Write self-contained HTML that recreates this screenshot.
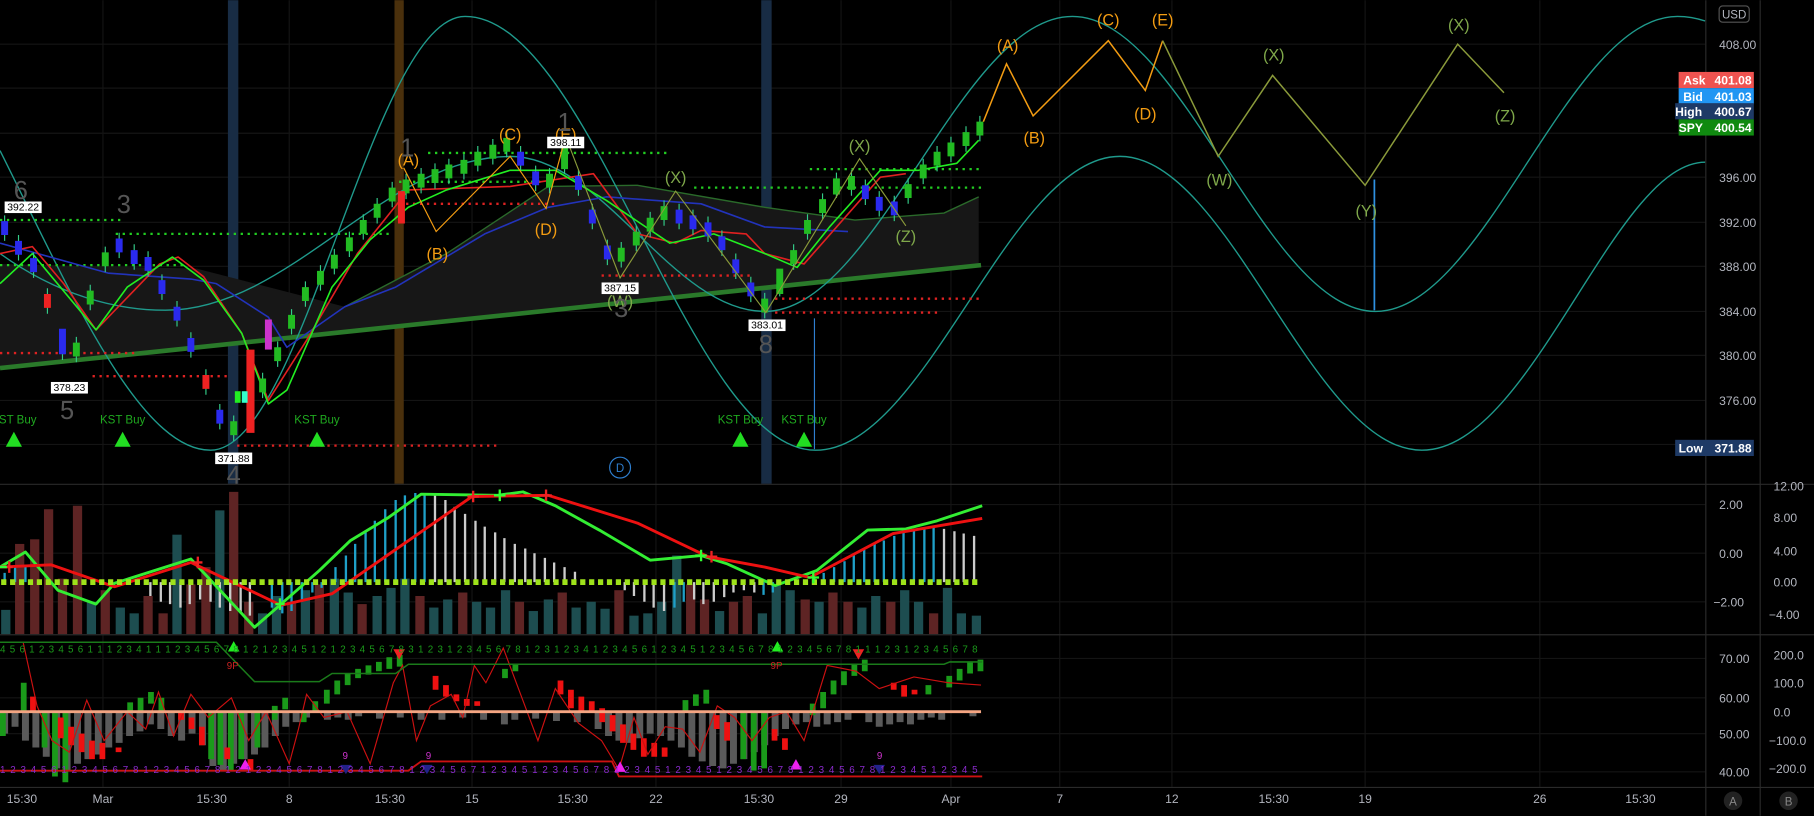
<!DOCTYPE html>
<html><head><meta charset="utf-8">
<style>
html,body{margin:0;padding:0;background:#000;overflow:hidden}
svg{display:block}
text{font-family:"Liberation Sans",sans-serif}
</style></head>
<body>
<svg width="1814" height="816" viewBox="0 0 1568 705" xmlns="http://www.w3.org/2000/svg">
<rect width="1568" height="705" fill="#000"/>
<g stroke="#141414" stroke-width="1">
<path d="M0,38H1474M0,76H1474M0,115H1474M0,153H1474M0,192H1474M0,230H1474M0,269H1474M0,307H1474M0,346H1474M0,384H1474M0,436H1474M0,478H1474M0,520H1474M0,569H1474M0,603H1474M0,634H1474M0,667H1474"/>
<path d="M89,0V680M250,0V680M408,0V680M567,0V680M727,0V680M822,0V680M916,0V680M1013,0V680M1180,0V680M1331,0V680"/>
</g>
<rect x="341" y="0" width="8" height="418" fill="#4a300c"/>
<rect x="197" y="0" width="9" height="418" fill="#182c44"/>
<rect x="658" y="0" width="9" height="418" fill="#182c44"/>

<!-- band -->
<path d="M0,228 L170,232 L298,265 L386,219 L474,161 L551,160 L661,179 L739,190 L816,184 L846,170 L846,229 L0,318 Z" fill="#171717"/>
<path d="M298,265 L386,219 L474,161 L551,160 L661,179 L739,190 L816,184 L846,170" fill="none" stroke="#2a6a2a" stroke-width="1.2"/>
<line x1="0" y1="318" x2="848" y2="229" stroke="#2a7a2a" stroke-width="4"/>

<!-- cycle curves -->
<g fill="none" stroke="#1f9a8c" stroke-width="1.2">
<path d="M0,130 C60,250 120,389 182,389 C262,389 322,14 402,14 C512,14 595,389 705,389 C801,389 872,135 968,135 C1063,135 1134,389 1229,389 C1324,389 1395,140 1474,140"/>
<path d="M0,219 C50,255 100,268 143,268 C251,268 333,135 441,135 C521,135 581,269 661,269 C758,269 830,14 927,14 C1022,14 1094,269 1189,269 C1284,269 1355,14 1450,14 C1460,14 1468,16 1474,18"/>
</g>

<!-- dotted levels -->
<g stroke-width="2" stroke-dasharray="2,4" fill="none">
<path stroke="#22cc22" d="M0,190H105M100,202H340M370,132H578M345,157H470M600,162H848M700,146H848M0,229H160"/>
<path stroke="#dd2222" d="M0,305H120M80,325H200M205,385H430M520,238H650M670,258H848M670,270H810M345,176H480"/>
</g>

<!-- MAs -->
<g fill="none" stroke-width="1.4" stroke-linejoin="round">
<path stroke="#2233bb" d="M0,210 L94,236 L165,241 L187,245 L232,274 L248,300 L298,265 L342,248 L419,202 L474,179 L524,170 L606,176 L661,196 L733,200"/>
<path stroke="#e02020" d="M0,219 L28,213 L55,245 L83,285 L138,228 L154,222 L176,239 L209,288 L232,346 L265,294 L309,219 L353,164 L441,161 L513,150 L551,202 L584,210 L606,199 L645,202 L661,219 L695,228 L761,153 L783,150"/>
<path stroke="#22ee22" d="M0,245 L28,219 L83,285 L110,248 L149,222 L176,242 L209,288 L232,349 L248,337 L287,248 L320,207 L353,179 L386,164 L441,147 L480,147 L524,173 L579,210 L617,202 L661,219 L689,231 L717,196 L761,147 L794,147 L827,141 L846,121"/>
</g>

<!-- candle wicks -->
<path stroke="#3c8" stroke-width="1" fill="none" d="M4,186v22M16,203v22M29,218v22M41,249v22M54,289v22M66,291v22M78,246v22M91,213v22M103,201v22M116,211v22M128,217v22M140,237v22M153,260v22M165,287v22M178,319v22M190,349v22M202,359v22M227,322v22M240,295v22M252,267v22M264,243v22M277,229v22M289,215v22M302,200v22M314,185v22M326,171v22M339,157v22M351,150v22M364,145v22M376,141v22M388,137v22M401,133v22M413,126v22M426,120v22M438,114v22M450,126v22M463,143v22M475,145v22M488,120v30M500,147v22M512,176v22M525,207v22M537,209v22M550,195v22M562,183v22M574,173v22M587,176v22M599,181v22M612,187v22M624,199v22M636,219v22M649,239v22M661,253v22M674,234v22M686,211v22M698,185v22M711,167v22M723,149v22M736,147v22M748,155v22M760,165v22M773,169v22M785,154v22M798,137v22M810,126v22M822,118v22M835,109v22M847,100v22"/>
<path fill="#22bb22" d="M63,296h6v12h-6zM75,251h6v12h-6zM88,218h6v12h-6zM199,364h6v12h-6zM224,327h6v12h-6zM237,300h6v12h-6zM249,272h6v12h-6zM261,248h6v12h-6zM274,234h6v12h-6zM286,220h6v12h-6zM299,205h6v12h-6zM311,190h6v12h-6zM323,176h6v12h-6zM336,162h6v12h-6zM348,155h6v12h-6zM361,150h6v12h-6zM373,146h6v12h-6zM385,142h6v12h-6zM398,138h6v12h-6zM410,131h6v12h-6zM423,125h6v12h-6zM435,119h6v12h-6zM472,150h6v12h-6zM485,126h6v20h-6zM534,214h6v12h-6zM547,200h6v12h-6zM559,188h6v12h-6zM571,178h6v12h-6zM658,258h6v12h-6zM671,232h6v22h-6zM683,216h6v12h-6zM695,190h6v12h-6zM708,172h6v12h-6zM720,154h6v14h-6zM733,152h6v12h-6zM782,159h6v12h-6zM795,142h6v12h-6zM807,131h6v12h-6zM819,123h6v12h-6zM832,114h6v12h-6zM844,105h6v12h-6z"/>
<path fill="#2a2aee" d="M1,191h6v12h-6zM13,208h6v12h-6zM26,223h6v12h-6zM51,284h6v22h-6zM100,206h6v12h-6zM113,216h6v12h-6zM125,222h6v12h-6zM137,242h6v12h-6zM150,265h6v12h-6zM162,292h6v12h-6zM187,354h6v12h-6zM447,131h6v12h-6zM460,148h6v12h-6zM497,152h6v12h-6zM509,181h6v12h-6zM522,212h6v12h-6zM584,181h6v12h-6zM596,186h6v12h-6zM609,192h6v12h-6zM621,204h6v12h-6zM633,224h6v12h-6zM646,244h6v12h-6zM745,160h6v12h-6zM757,170h6v12h-6zM770,174h6v12h-6z"/>
<path fill="#ee2222" d="M38,254h6v12h-6zM175,324h6v12h-6zM213,302h7v72h-7zM344,165h6v28h-6z"/>
<rect x="229" y="276" width="6" height="26" fill="#cc33cc"/>
<rect x="203" y="338" width="5" height="10" fill="#22ee22"/><rect x="209" y="338" width="5" height="10" fill="#33ffcc"/>
<line x1="704" y1="275" x2="704" y2="388" stroke="#2f7fd0" stroke-width="1"/>

<!-- wave count -->
<polyline points="850,105 870,55 893,100 958,35 990,78 1005,35" fill="none" stroke="#f39c12" stroke-width="1.3"/>
<polyline points="1005,35 1053,135 1100,65 1180,160 1260,38 1300,80" fill="none" stroke="#8a9a3a" stroke-width="1.3"/>
<polyline points="349,145 377,200 441,135 472,180 489,118" fill="none" stroke="#f39c12" stroke-width="1"/>
<polyline points="489,118 536,240 584,165 662,270 743,137 783,195" fill="none" stroke="#8a9a3a" stroke-width="1"/>
<line x1="1188" y1="155" x2="1188" y2="268" stroke="#2f90e0" stroke-width="1.5"/>
<g font-size="14" text-anchor="middle">
<text x="871" y="44" fill="#f39c12">(A)</text>
<text x="894" y="124" fill="#f39c12">(B)</text>
<text x="958" y="22" fill="#f39c12">(C)</text>
<text x="990" y="103" fill="#f39c12">(D)</text>
<text x="1005" y="22" fill="#f39c12">(E)</text>
<text x="1054" y="160" fill="#7fa84a">(W)</text>
<text x="1101" y="52" fill="#7fa84a">(X)</text>
<text x="1181" y="187" fill="#7fa84a">(Y)</text>
<text x="1261" y="26" fill="#7fa84a">(X)</text>
<text x="1301" y="105" fill="#7fa84a">(Z)</text>
<text x="353" y="143" fill="#f39c12">(A)</text>
<text x="378" y="224" fill="#f39c12">(B)</text>
<text x="441" y="121" fill="#f39c12">(C)</text>
<text x="472" y="203" fill="#f39c12">(D)</text>
<text x="489" y="121" fill="#f39c12">(E)</text>
<text x="584" y="158" fill="#7fa84a">(X)</text>
<text x="536" y="265" fill="#7fa84a">(W)</text>
<text x="743" y="131" fill="#7fa84a">(X)</text>
<text x="783" y="209" fill="#7fa84a">(Z)</text>
</g>
<g font-size="22" fill="#555" text-anchor="middle">
<text x="18" y="172">6</text><text x="107" y="184">3</text><text x="58" y="362">5</text>
<text x="352" y="135">1</text><text x="488" y="113">1</text><text x="537" y="274">3</text>
<text x="662" y="305">8</text><text x="202" y="418">4</text>
</g>
<g font-size="10" fill="#1fa81f" text-anchor="middle">
<text x="12" y="366">KST Buy</text><text x="106" y="366">KST Buy</text><text x="274" y="366">KST Buy</text>
<text x="640" y="366">KST Buy</text><text x="695" y="366">KST Buy</text>
</g>
<g fill="#22dd22">
<polygon points="12,373 19,386 5,386"/><polygon points="106,373 113,386 99,386"/><polygon points="274,373 281,386 267,386"/>
<polygon points="640,373 647,386 633,386"/><polygon points="695,373 702,386 688,386"/>
</g>
<g font-size="9" text-anchor="middle">
<rect x="4" y="174" width="32" height="10" fill="#fff"/><text x="20" y="182">392.22</text>
<rect x="44" y="330" width="32" height="10" fill="#fff"/><text x="60" y="338">378.23</text>
<rect x="186" y="391" width="32" height="10" fill="#fff"/><text x="202" y="399">371.88</text>
<rect x="473" y="118" width="32" height="10" fill="#fff"/><text x="489" y="126">398.11</text>
<rect x="520" y="244" width="32" height="10" fill="#fff"/><text x="536" y="252">387.15</text>
<rect x="647" y="276" width="32" height="10" fill="#fff"/><text x="663" y="284">383.01</text>
</g>
<circle cx="536" cy="404" r="9" fill="none" stroke="#2f7fd0"/><text x="536" y="408" font-size="10" fill="#2f7fd0" text-anchor="middle">D</text>

<!-- pane 2 -->
<g fill="#1d4d50">
<rect x="1" y="527" width="8" height="21"/><rect x="75" y="520" width="8" height="28"/><rect x="100" y="525" width="8" height="23"/><rect x="112" y="530" width="8" height="18"/><rect x="149" y="462" width="8" height="86"/><rect x="186" y="441" width="8" height="107"/><rect x="223" y="530" width="8" height="18"/><rect x="235" y="515" width="8" height="33"/><rect x="260" y="510" width="8" height="38"/><rect x="285" y="500" width="8" height="48"/><rect x="297" y="512" width="8" height="36"/><rect x="322" y="515" width="8" height="33"/><rect x="334" y="508" width="8" height="40"/><rect x="346" y="500" width="8" height="48"/><rect x="371" y="525" width="8" height="23"/><rect x="383" y="518" width="8" height="30"/><rect x="408" y="520" width="8" height="28"/><rect x="420" y="525" width="8" height="23"/><rect x="433" y="510" width="8" height="38"/><rect x="457" y="528" width="8" height="20"/><rect x="470" y="518" width="8" height="30"/><rect x="494" y="525" width="8" height="23"/><rect x="507" y="520" width="8" height="28"/><rect x="519" y="526" width="8" height="22"/><rect x="544" y="532" width="8" height="16"/><rect x="556" y="530" width="8" height="18"/><rect x="568" y="520" width="8" height="28"/><rect x="581" y="480" width="8" height="68"/><rect x="618" y="528" width="8" height="20"/><rect x="655" y="530" width="8" height="18"/><rect x="667" y="505" width="8" height="43"/><rect x="679" y="510" width="8" height="38"/><rect x="704" y="520" width="8" height="28"/><rect x="741" y="525" width="8" height="23"/><rect x="753" y="515" width="8" height="33"/><rect x="778" y="510" width="8" height="38"/><rect x="790" y="520" width="8" height="28"/><rect x="815" y="508" width="8" height="40"/><rect x="827" y="530" width="8" height="18"/><rect x="840" y="532" width="8" height="16"/>
</g>
<g fill="#5e2424">
<rect x="13" y="470" width="8" height="78"/><rect x="26" y="466" width="8" height="82"/><rect x="38" y="440" width="8" height="108"/><rect x="50" y="500" width="8" height="48"/><rect x="63" y="437" width="8" height="111"/><rect x="87" y="510" width="8" height="38"/><rect x="124" y="515" width="8" height="33"/><rect x="137" y="530" width="8" height="18"/><rect x="161" y="505" width="8" height="43"/><rect x="174" y="490" width="8" height="58"/><rect x="198" y="425" width="8" height="123"/><rect x="211" y="520" width="8" height="28"/><rect x="248" y="520" width="8" height="28"/><rect x="272" y="505" width="8" height="43"/><rect x="309" y="522" width="8" height="26"/><rect x="359" y="515" width="8" height="33"/><rect x="396" y="512" width="8" height="36"/><rect x="445" y="520" width="8" height="28"/><rect x="482" y="512" width="8" height="36"/><rect x="531" y="510" width="8" height="38"/><rect x="593" y="505" width="8" height="43"/><rect x="605" y="518" width="8" height="30"/><rect x="630" y="520" width="8" height="28"/><rect x="642" y="515" width="8" height="33"/><rect x="692" y="518" width="8" height="30"/><rect x="716" y="512" width="8" height="36"/><rect x="729" y="520" width="8" height="28"/><rect x="766" y="520" width="8" height="28"/><rect x="803" y="530" width="8" height="18"/>
</g>
<path stroke="#1fa0c8" stroke-width="2" d="M290,503V490M299,503V480M307,503V470M316,503V460M324,503V450M333,503V440M342,503V432M350,503V428M359,503V426M367,503V427M235,503V525M244,503V530M252,503V528M261,503V520M270,503V512M278,503V508M4,503V495M13,503V490M22,503V488M704,503V498M712,503V495M721,503V490M730,503V485M738,503V480M747,503V475M756,503V470M764,503V467M773,503V463M781,503V460M790,503V458M799,503V456M807,503V455M583,503V525M591,503V520M660,503V514M668,503V512"/>
<path stroke="#cccccc" stroke-width="2" d="M376,503V428M385,503V432M393,503V438M402,503V444M411,503V450M419,503V455M428,503V460M436,503V465M445,503V470M454,503V474M462,503V478M471,503V482M479,503V486M488,503V490M497,503V494M130,503V515M139,503V520M147,503V522M156,503V525M164,503V522M173,503V518M182,503V520M190,503V525M199,503V528M208,503V530M216,503V532M540,503V510M548,503V515M557,503V520M565,503V525M574,503V528M600,503V518M608,503V522M617,503V520M626,503V516M634,503V512M643,503V510M652,503V512M816,503V457M825,503V459M833,503V461M842,503V463"/>
<path fill="none" stroke="#33ee33" stroke-width="2.5" stroke-linejoin="round" d="M0,490 L22,477 L50,510 L83,522 L99,504 L165,483 L220,542 L243,522 L276,493 L303,467 L336,447 L364,427 L430,428 L452,425 L480,437 L518,458 L562,484 L606,480 L628,487 L670,506 L706,493 L750,458 L783,457 L810,450 L849,437"/>
<path fill="none" stroke="#ee1111" stroke-width="2.5" stroke-linejoin="round" d="M0,490 L44,488 L99,507 L165,486 L243,523 L287,513 L408,429 L474,428 L551,452 L612,481 L661,490 L700,499 L772,461 L849,448"/>
<path stroke="#9ee21a" stroke-width="5" stroke-dasharray="4.5,3.2" d="M1,503H848"/>
<g stroke-width="2" fill="none"><path stroke="#ee2222" d="M3,490h8M8,485v10M167,486h8M171,481v10M404,429h10M409,424v10M467,428h10M472,423v10M610,481h10M615,476v10"/><path stroke="#33ff33" d="M0,490h6M238,522h8M242,517v10M427,428h10M432,423v10M698,499h10M703,494v10M601,480h10M606,475v10"/></g>

<!-- pane 3 -->
<g fill="#5a5a5a">
<path d="M1,616h6v18h-6zM10,616h6v12h-6zM19,616h6v24h-6zM28,616h6v30h-6zM37,616h6v38h-6zM46,616h6v48h-6zM55,616h6v50h-6zM64,616h6v44h-6zM73,616h6v40h-6zM82,616h6v36h-6zM91,616h6v30h-6zM100,616h6v26h-6zM109,616h6v20h-6zM118,616h6v16h-6zM127,616h6v10h-6zM136,616h6v14h-6zM145,616h6v20h-6zM154,616h6v24h-6zM163,616h6v18h-6zM172,616h6v28h-6zM181,616h6v46h-6zM190,616h6v50h-6zM199,616h6v44h-6zM208,616h6v40h-6zM217,616h6v36h-6zM226,616h6v30h-6zM235,616h6v20h-6zM244,616h6v12h-6zM253,616h6v8h-6zM262,616h6v4h-6zM280,616h6v6h-6zM289,616h6v4h-6zM298,616h6v6h-6zM307,616h6v3h-6zM325,616h6v5h-6zM343,616h6v4h-6zM361,616h6v6h-6zM379,616h6v6h-6zM397,616h6v4h-6zM415,616h6v6h-6zM433,616h6v10h-6zM442,616h6v6h-6zM460,616h6v5h-6zM478,616h6v7h-6zM496,616h6v8h-6zM514,616h6v14h-6zM523,616h6v20h-6zM532,616h6v24h-6zM541,616h6v26h-6zM550,616h6v22h-6zM559,616h6v18h-6zM568,616h6v20h-6zM577,616h6v24h-6zM586,616h6v30h-6zM595,616h6v38h-6zM604,616h6v42h-6zM613,616h6v46h-6zM622,616h6v48h-6zM631,616h6v44h-6zM640,616h6v40h-6zM649,616h6v34h-6zM658,616h6v28h-6zM667,616h6v20h-6zM676,616h6v14h-6zM685,616h6v10h-6zM694,616h6v8h-6zM703,616h6v12h-6zM712,616h6v10h-6zM721,616h6v8h-6zM730,616h6v6h-6zM748,616h6v8h-6zM757,616h6v12h-6zM766,616h6v10h-6zM775,616h6v8h-6zM784,616h6v10h-6zM793,616h6v6h-6zM802,616h6v4h-6zM811,616h6v6h-6zM838,616h6v3h-6z"/>
</g>
<path fill="#1a9a1a" d="M0,616h5v20h-5zM18,590h5v26h-5zM36,616h5v30h-5zM45,616h5v55h-5zM54,616h5v60h-5zM110,607h5v9h-5zM119,603h5v13h-5zM128,598h5v10h-5zM137,603h5v13h-5zM180,616h5v40h-5zM188,616h5v45h-5zM197,616h5v50h-5zM206,616h5v40h-5zM220,616h5v30h-5zM235,610h5v12h-5zM244,603h5v10h-5zM260,616h5v8h-5zM270,606h5v10h-5zM280,596h5v12h-5zM289,588h5v12h-5zM298,582h5v10h-5zM307,578h5v8h-5zM316,575h5v8h-5zM325,572h5v8h-5zM334,568h5v10h-5zM343,566h5v10h-5zM434,578h5v8h-5zM443,574h5v6h-5zM590,605h5v10h-5zM599,600h5v10h-5zM608,596h5v12h-5zM640,616h5v40h-5zM649,616h5v50h-5zM658,616h5v48h-5zM700,608h5v10h-5zM709,598h5v14h-5zM718,588h5v12h-5zM727,580h5v12h-5zM736,574h5v10h-5zM745,570h5v10h-5zM800,592h5v8h-5zM818,584h5v10h-5zM827,578h5v10h-5zM836,572h5v10h-5zM845,570h5v10h-5z"/>
<path fill="#ee1111" d="M26,602h5v12h-5zM50,620h5v18h-5zM59,628h5v16h-5zM68,634h5v16h-5zM77,640h5v16h-5zM86,642h5v14h-5zM100,646h5v4h-5zM154,614h5v8h-5zM163,620h5v10h-5zM172,628h5v16h-5zM194,646h5v10h-5zM214,656h5v10h-5zM374,584h5v12h-5zM383,592h5v10h-5zM392,600h5v6h-5zM401,604h5v6h-5zM410,606h5v4h-5zM482,588h5v12h-5zM491,596h5v16h-5zM500,602h5v12h-5zM509,606h5v10h-5zM518,612h5v12h-5zM527,618h5v14h-5zM536,626h5v16h-5zM545,634h5v14h-5zM554,638h5v16h-5zM563,642h5v12h-5zM572,646h5v8h-5zM617,618h5v12h-5zM626,624h5v16h-5zM667,630h5v10h-5zM676,638h5v10h-5zM770,590h5v6h-5zM779,592h5v10h-5zM788,596h5v4h-5z"/>
<path fill="none" stroke="#cc1111" stroke-width="1" d="M0,555 L20,555 L32,610 L45,640 L60,650 L75,605 L90,640 L110,615 L126,630 L137,598 L150,636 L165,600 L180,620 L200,603 L215,640 L230,615 L250,660 L258,630 L265,600 L280,620 L300,615 L320,660 L340,590 L348,575 L360,640 L372,610 L390,600 L400,620 L410,575 L420,590 L435,560 L450,600 L465,640 L480,595 L500,625 L520,640 L535,665 L548,620 L560,652 L575,628 L590,630 L605,650 L620,610 L635,620 L650,640 L665,620 L680,615 L695,640 L715,575 L740,580 L760,595 L790,585 L820,590 L848,592"/>
<path fill="none" stroke="#1a7a1a" stroke-width="1.3" d="M0,555 L187,555 L220,589 L276,589 L287,582 L342,582 L353,574 L816,574 L821,572 L849,572"/>
<path fill="none" stroke="#cc1111" stroke-width="1.6" d="M0,666 L353,666 L364,658 L529,658 L535,671 L849,671"/>
<line x1="0" y1="615" x2="848" y2="615" stroke="#f4a582" stroke-width="2.5"/>
<g fill="#22ee22"><polygon points="202,554 207,563 197,563"/><polygon points="672,554 677,563 667,563"/></g>
<g fill="#ee2222"><polygon points="340,561 350,561 345,570"/><polygon points="737,561 747,561 742,570"/></g>
<g fill="#ee22ee"><polygon points="212,656 217,665 207,665"/><polygon points="536,658 541,667 531,667"/><polygon points="688,656 693,665 683,665"/></g>
<g fill="#22228a"><polygon points="294,661 304,661 299,669"/><polygon points="364,661 374,661 369,669"/><polygon points="755,661 765,661 760,669"/></g>
<g font-size="8.5">
<text x="0" y="564" fill="#1a9a1a" textLength="845" lengthAdjust="spacing">4 5 6 1 2 3 4 5 6 1 1 1 2 3 4 1 1 1 2 3 4 5 6 7 8 1 2 1 2 3 4 5 1 2 1 2 3 4 5 6 7 8 3 1 2 3 1 2 3 4 5 6 7 8 1 2 3 1 2 3 4 1 2 3 4 5 6 1 2 3 4 5 1 2 3 4 5 6 7 8 1 2 3 4 5 6 7 8 1 1 1 2 3 1 2 3 4 5 6 7 8</text>
<text x="0" y="668" fill="#8a2acc" textLength="845" lengthAdjust="spacing">1 2 3 4 5 6 1 2 3 4 5 6 7 8 1 2 3 4 5 6 7 8 1 2 1 2 3 4 5 6 7 8 1 2 3 4 5 6 7 8 1 2 3 4 5 6 7 1 2 3 4 5 1 2 3 4 5 6 7 8 1 2 3 4 5 1 2 3 4 5 1 2 3 4 5 6 7 8 1 2 3 4 5 6 7 8 1 2 3 4 5 1 2 3 4 5</text>
<text x="296" y="656" fill="#cc33cc">9</text><text x="368" y="656" fill="#cc33cc">9</text><text x="758" y="656" fill="#cc33cc">9</text>
<text x="196" y="578" fill="#cc2222">9P</text><text x="666" y="578" fill="#cc2222">9P</text>
</g>

<!-- separators -->
<line x1="0" y1="418.5" x2="1568" y2="418.5" stroke="#2a2a2a"/>
<line x1="0" y1="548.5" x2="1568" y2="548.5" stroke="#2a2a2a"/>
<line x1="0" y1="680.5" x2="1568" y2="680.5" stroke="#2a2a2a"/>
<line x1="1474.5" y1="0" x2="1474.5" y2="705" stroke="#2a2a2a"/>
<line x1="1521.5" y1="0" x2="1521.5" y2="705" stroke="#2a2a2a"/>

<g font-size="10.5" fill="#b2b5be">
<text x="1486" y="42">408.00</text><text x="1486" y="157">396.00</text><text x="1486" y="196">392.00</text>
<text x="1486" y="234">388.00</text><text x="1486" y="273">384.00</text><text x="1486" y="311">380.00</text><text x="1486" y="350">376.00</text>
<text x="1486" y="440">2.00</text><text x="1486" y="482">0.00</text><text x="1481" y="524">−2.00</text>
<text x="1533" y="424">12.00</text><text x="1533" y="451">8.00</text><text x="1533" y="480">4.00</text><text x="1533" y="507">0.00</text><text x="1529" y="535">−4.00</text>
<text x="1486" y="573">70.00</text><text x="1486" y="607">60.00</text><text x="1486" y="638">50.00</text><text x="1486" y="671">40.00</text>
<text x="1533" y="570">200.0</text><text x="1533" y="594">100.0</text><text x="1533" y="619">0.0</text><text x="1529" y="644">−100.0</text><text x="1529" y="668">−200.0</text>
</g>
<rect x="1486" y="5" width="26" height="14" rx="3" fill="none" stroke="#555"/><text x="1499" y="16" font-size="10" fill="#b2b5be" text-anchor="middle">USD</text>
<g font-size="10.5" font-weight="bold" fill="#fff">
<rect x="1451" y="62" width="65" height="14" fill="#ef5350"/><text x="1455" y="73">Ask</text><text x="1482" y="73">401.08</text>
<rect x="1451" y="76" width="65" height="14" fill="#2196f3"/><text x="1455" y="87">Bid</text><text x="1482" y="87">401.03</text>
<rect x="1448" y="89" width="68" height="14" fill="#1e3a66"/><text x="1448" y="100">High</text><text x="1482" y="100">400.67</text>
<rect x="1451" y="103" width="65" height="14" fill="#108a10"/><text x="1451" y="114">SPY</text><text x="1482" y="114">400.54</text>
<rect x="1448" y="380" width="68" height="14" fill="#1e3a66"/><text x="1451" y="391">Low</text><text x="1482" y="391">371.88</text>
</g>
<g font-size="10.5" fill="#b2b5be" text-anchor="middle">
<text x="19" y="694">15:30</text><text x="89" y="694">Mar</text><text x="183" y="694">15:30</text><text x="250" y="694">8</text>
<text x="337" y="694">15:30</text><text x="408" y="694">15</text><text x="495" y="694">15:30</text><text x="567" y="694">22</text>
<text x="656" y="694">15:30</text><text x="727" y="694">29</text><text x="822" y="694">Apr</text><text x="916" y="694">7</text>
<text x="1013" y="694">12</text><text x="1101" y="694">15:30</text><text x="1180" y="694">19</text><text x="1331" y="694">26</text><text x="1418" y="694">15:30</text>
</g>
<circle cx="1498" cy="692" r="8" fill="#222"/><text x="1498" y="696" font-size="10" fill="#888" text-anchor="middle">A</text>
<circle cx="1546" cy="692" r="8" fill="#222"/><text x="1546" y="696" font-size="10" fill="#888" text-anchor="middle">B</text>
</svg>
</body></html>
